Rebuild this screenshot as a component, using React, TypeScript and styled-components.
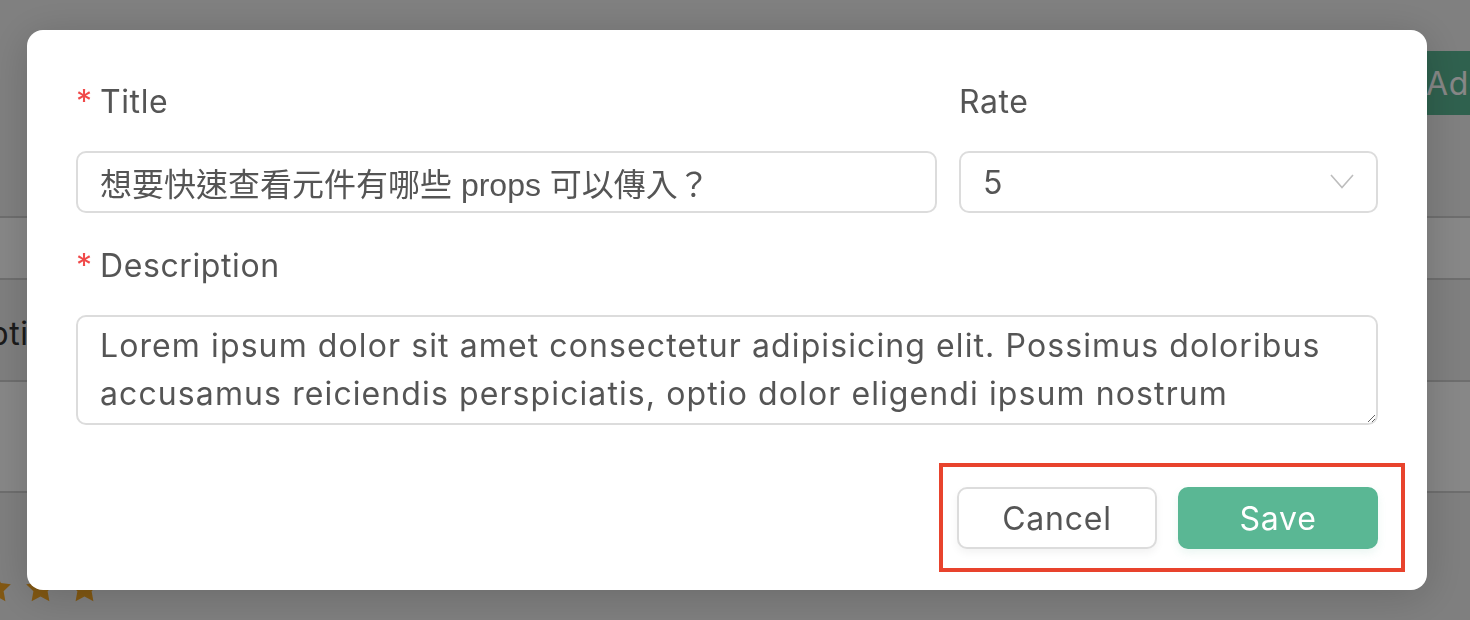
import React from "react";
import styled, { createGlobalStyle } from "styled-components";

const FONT = `Inter, "Noto Sans CJK TC", sans-serif`;

const GlobalStyle = createGlobalStyle`
  html, body { margin: 0; padding: 0; }
  body {
    width: 1470px;
    height: 620px;
    overflow: hidden;
    font-family: ${FONT};
    background: #f2f2f2;
  }
  * { box-sizing: border-box; }
`;

/* ---------- page behind the dialog ---------- */

const Page = styled.div`
  position: relative;
  width: 1470px;
  height: 620px;
  overflow: hidden;
  background: #f2f2f2;
  display: flex;
  flex-direction: column;
  font-family: ${FONT};
  color: #333;
`;

const Toolbar = styled.div`
  display: flex;
  justify-content: flex-end;
  margin-top: 51px;
  margin-right: -170px;
  height: 64px;
`;

const AddButton = styled.button`
  width: 240px;
  height: 64px;
  border: none;
  border-radius: 10px;
  background: #5ab794;
  color: #fff;
  font-family: ${FONT};
  font-size: 32px;
  letter-spacing: 0.6px;
  text-align: left;
  padding-left: 26px;
`;

const Table = styled.div`
  margin-top: 101px;
  display: flex;
  flex-direction: column;
`;

const Row = styled.div<{ $h: number; $alt?: boolean }>`
  height: ${(p) => p.$h}px;
  border-top: 2px solid #d0d0d0;
  background: ${(p) => (p.$alt ? "#f0f0f0" : "#ffffff")};
  display: flex;
  align-items: center;
`;

const CellText = styled.span`
  font-size: 32px;
  letter-spacing: 0.6px;
  margin-left: -36px;
  margin-top: 6px;
`;

const Stars = styled.div`
  display: flex;
  gap: 13px;
  margin-left: -19px;
  margin-top: 52px;
`;

const Star = () => (
  <svg width="31" height="31" viewBox="0 0 24 24">
    <path
      d="M12 0.8l3.4 7 7.7 1-5.6 5.3 1.4 7.7L12 18.1l-6.9 3.7 1.4-7.7L0.9 8.8l7.7-1z"
      fill="#f5a623"
    />
  </svg>
);

/* ---------- dialog ---------- */

const Overlay = styled.div`
  position: fixed;
  inset: 0;
  background: rgba(0, 0, 0, 0.47);
`;

const Modal = styled.div`
  margin: 30px 0 0 27px;
  width: 1400px;
  height: 560px;
  background: #fff;
  border-radius: 16px;
  padding: 48px 49px 41px 49px;
  box-shadow: 0 6px 40px rgba(0, 0, 0, 0.18);
  display: flex;
  flex-direction: column;
`;

const FieldsRow = styled.div`
  display: grid;
  grid-template-columns: 861px 1fr;
  column-gap: 22px;
`;

const Field = styled.div<{ $gapTop?: number }>`
  display: flex;
  flex-direction: column;
  margin-top: ${(p) => p.$gapTop ?? 0}px;
`;

const Label = styled.label`
  display: flex;
  align-items: baseline;
  height: 48px;
  line-height: 48px;
  margin-bottom: 25px;
  font-size: 32px;
  letter-spacing: 0.6px;
  color: #555;
`;

const Asterisk = styled.span`
  display: inline-block;
  width: 24px;
  color: #f04a4a;
`;

const controlBase = `
  width: 100%;
  border: 2px solid #dcdcdc;
  border-radius: 10px;
  background: #fff;
  color: #555;
  font-size: 32px;
  outline: none;
`;

const TextInput = styled.input`
  ${controlBase}
  height: 62px;
  padding: 0 22px;
  font-family: "Liberation Sans", "Noto Sans CJK TC", sans-serif;
`;

const SelectWrap = styled.div`
  position: relative;
  height: 62px;
`;

const Select = styled.select`
  ${controlBase}
  height: 62px;
  padding: 0 60px 0 22px;
  appearance: none;
  font-family: ${FONT};
`;

const Chevron = styled.svg`
  position: absolute;
  right: 24px;
  top: 23px;
  pointer-events: none;
`;

const TextArea = styled.textarea`
  ${controlBase}
  height: 110px;
  padding: 5px 22px;
  line-height: 48px;
  letter-spacing: 1.1px;
  font-family: ${FONT};
  resize: vertical;
  overflow: hidden;
  display: block;
`;

const Footer = styled.div`
  display: flex;
  justify-content: flex-end;
  margin-top: 62px;
`;

const ButtonGroup = styled.div`
  position: relative;
  display: flex;
  gap: 21px;
`;

const HighlightFrame = styled.div`
  position: absolute;
  top: -24px;
  bottom: -23px;
  left: -18px;
  right: -27px;
  border: 4px solid #e8432d;
  pointer-events: none;
`;

const Button = styled.button<{ $primary?: boolean }>`
  width: 200px;
  height: 62px;
  border-radius: 10px;
  font-family: ${FONT};
  font-size: 32px;
  letter-spacing: 0.8px;
  cursor: pointer;
  border: 2px solid ${(p) => (p.$primary ? "#5ab794" : "#dcdcdc")};
  background: ${(p) => (p.$primary ? "#5ab794" : "#fff")};
  color: ${(p) => (p.$primary ? "#fff" : "#555")};
  box-shadow: ${(p) =>
    p.$primary ? "0 4px 8px rgba(90, 183, 148, 0.12)" : "0 4px 8px rgba(0, 0, 0, 0.05)"};
`;

const DESCRIPTION =
  "Lorem ipsum dolor sit amet consectetur adipisicing elit. Possimus doloribus accusamus reiciendis perspiciatis, optio dolor eligendi ipsum nostrum";

export default function App() {
  return (
    <>
      <GlobalStyle />
      <Page>
        <Toolbar>
          <AddButton>Add Item</AddButton>
        </Toolbar>
        <Table>
          <Row $h={62} />
          <Row $h={102} $alt>
            <CellText>Options</CellText>
          </Row>
          <Row $h={111} />
          <Row $h={140} $alt>
            <Stars>
              <Star />
              <Star />
              <Star />
            </Stars>
          </Row>
        </Table>
        <Overlay>
          <Modal>
            <FieldsRow>
              <Field>
                <Label>
                  <Asterisk>*</Asterisk>Title
                </Label>
                <TextInput defaultValue="想要快速查看元件有哪些 props 可以傳入？" />
              </Field>
              <Field>
                <Label>Rate</Label>
                <SelectWrap>
                  <Select defaultValue="5">
                    <option value="1">1</option>
                    <option value="2">2</option>
                    <option value="3">3</option>
                    <option value="4">4</option>
                    <option value="5">5</option>
                  </Select>
                  <Chevron width="24" height="15" viewBox="0 0 24 15">
                    <polyline
                      points="1,1 12,13.5 23,1"
                      fill="none"
                      stroke="#bdbdbd"
                      strokeWidth="1.6"
                    />
                  </Chevron>
                </SelectWrap>
              </Field>
            </FieldsRow>
            <Field $gapTop={29}>
              <Label>
                <Asterisk>*</Asterisk>Description
              </Label>
              <TextArea defaultValue={DESCRIPTION} />
            </Field>
            <Footer>
              <ButtonGroup>
                <Button>Cancel</Button>
                <Button $primary>Save</Button>
                <HighlightFrame />
              </ButtonGroup>
            </Footer>
          </Modal>
        </Overlay>
      </Page>
    </>
  );
}
